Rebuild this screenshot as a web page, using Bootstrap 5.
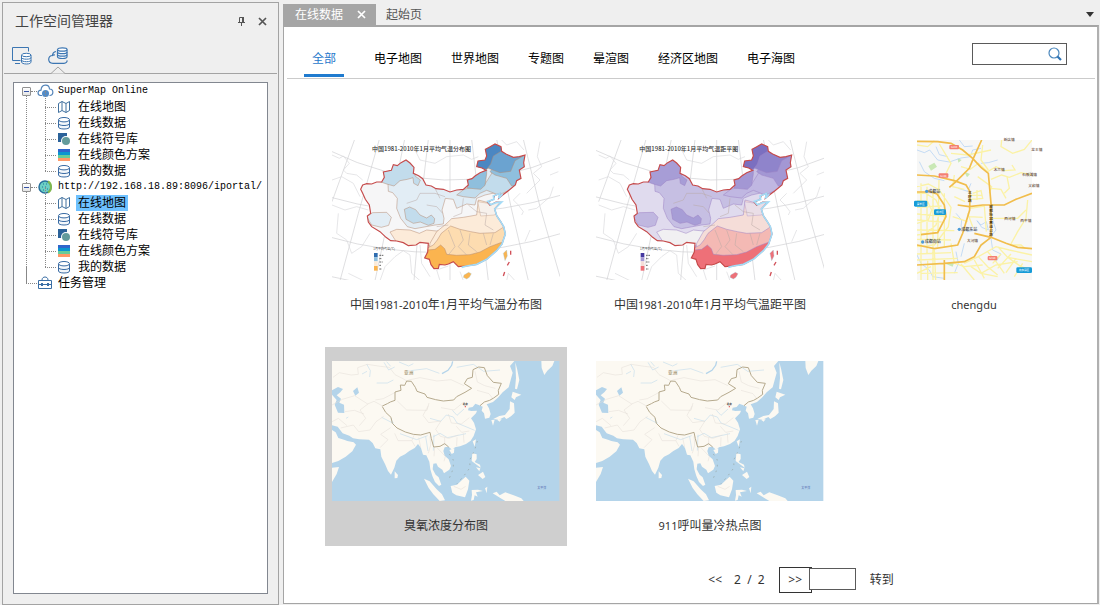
<!DOCTYPE html>
<html lang="zh-CN">
<head>
<meta charset="utf-8">
<meta name="viewport" content="width=device-width, initial-scale=1">
<title>在线数据</title>
<link href="https://cdn.jsdelivr.net/npm/bootstrap@5.3.0/dist/css/bootstrap.min.css" rel="stylesheet">
<style>
  body { font: 12px/16px "Noto Sans", "Noto Sans CJK SC", sans-serif; color: #333; background: #efefef; min-height: 100vh; padding: 2px 1px 0 2px; gap: 4px; }
  button, input { font: inherit; color: inherit; }
  .plain { border: 0; background: none; padding: 0; display: flex; align-items: center; }
  svg { display: block; }
  /* workspace panel */
  .workspace { width: 277px; border: 1px solid #a3a3a3; }
  .workspace-title { font-size: 14px; line-height: 20px; color: #444; height: 36px; padding: 0 11px 0 12px; }
  .modes { height: 35px; margin: 0 1px; padding-left: 8px; gap: 16px; border-bottom: 1px solid #a3a3a3; }
  .modes .plain { height: 34px; }
  .caret { position: absolute; left: 3px; bottom: -1px; }
  .tree-box { margin: 8px 10px 10px; background: #fff; border: 1px solid #828790; color: #000; overflow: hidden; }
  .tree, .tree ul { list-style: none; margin: 0; padding: 0; }
  .tree { padding-left: 8px; }
  .tree li { position: relative; white-space: nowrap; }
  .tree .node { height: 16px; }
  .tree .latin { font: 10px/16px "Liberation Mono", monospace; }
  .tree ul { padding-left: 23px; }
  .tree ul .node { padding-left: 12px; gap: 5px; }
  .tree ul .node > span { padding: 0 2px; }
  .tree .picked { background: #6ec1ff; }
  .tree li::before { content: ""; position: absolute; left: 4px; top: 8px; bottom: -8px; border-left: 1px dotted #888; }
  .tree > li:last-child::before { top: 0; bottom: auto; height: 8px; top: -8px; height: 17px; }
  .tree ul li::before { left: 0; top: -8px; bottom: 8px; }
  .dots { width: 6px; border-top: 1px dotted #888; }
  .dots-long { width: 11px; margin-left: 4px; }
  .tree ul li::after { content: ""; position: absolute; left: 0; top: 8px; width: 11px; border-top: 1px dotted #888; }
  .toggle { width: 9px; height: 9px; border: 1px solid #919191; border-radius: 1px; background: linear-gradient(#fff, #e4e4e4); padding: 0; position: relative; z-index: 1; }
  .toggle::before { content: ""; display: block; height: 1px; margin: 0 1px; background: #3552a5; }
  /* documents */
  .docs { padding-top: 2px; }
  .doc-tabs { height: 21px; padding-right: 5px; }
  .doc-tab { height: 21px; color: #555; }
  .doc-tab.current { background: #a5a5a5; color: #fff; padding: 0 10px 0 12px; gap: 14px; margin-right: 10px; }
  .page { border: 1px solid #a5a5a5; border-top-width: 2px; border-right: 2px solid #b0b0b0; background: #fff; margin-bottom: 1px; }
  .filters { margin: 0 2px 0 3px; padding: 16px 28px 0 17px; border-bottom: 1px solid #cbcbcb; height: 52px; }
  .filters nav { gap: 13px; }
  .filters nav a { color: #000; text-decoration: none; padding: 0 8px; line-height: 32px; height: 34px; }
  .filters nav a.on { color: #1f78cb; border-bottom: 4px solid #1f7bcf; border-bottom-width: 3px; margin-right: 9px; }
  .search { width: 95px; height: 22px; border: 1px solid #5a5a5a; background: #fff; }
  .search input { border: 0; outline: 0; min-width: 0; background: none; }
  .gallery { display: grid; grid-template-columns: repeat(auto-fill, 242px); gap: 22px; padding: 47px 0 21px 41px; }
  .tile { height: 199px; margin: 0; padding-top: 14px; }
  .tile figcaption { margin-top: 17px; text-align: center; }
  .tile small-n, .num { font-size: 11px; }
  .tile.selected { background: #cfcfcf; }
  .thumb { margin-left: 7px; width: 228px; height: 140px; }
  .thumb-square { margin: 0 auto; width: 115px; height: 140px; overflow: visible; }
  .pager { margin: 0 25% 10px auto; }
  .pager .go { border: 1px solid #333; height: 26px; width: 33px; background: #fff; padding: 0; margin-left: 14px; }
  .pager input { width: 47px; height: 22px; border: 1px solid #5a5a5a; border-radius: 0; margin: 0 14px 2px -3px; position: relative; padding: 0 4px; }
  /* climate map zones */
  .warm { --base:#e2edf5; --west:#f6f6f7; --nw:#c2dcec; --blob:#c2dcec; --spot:#e2edf5; --n1:#c2dcec; --n2:#8fbfdd; --n3:#6ba3d0; --n4:#4b87c2; --mid:#f4f4f6; --low:#fcebd9; --south:#fddcb0; --coast:#fbb44f; --tib:#fcebd9; --edge:#b58a72; --top:#2f6db0; }
  .anom { --base:#c6bfe3; --west:#e0dbee; --nw:#a79dd6; --blob:#a79dd6; --spot:#c0b7e0; --n1:#c0b7e2; --n2:#a397d4; --n3:#8f84cb; --n4:#7b6fc0; --mid:#e3dff0; --low:#f5ddd8; --south:#f4b9b4; --coast:#ee7078; --tib:#f1f0f2; --edge:#9c83c4; --top:#4438a0; }
  .map-text { font-family: "Noto Sans CJK SC", sans-serif; }
</style>
</head>
<body class="d-flex">

<svg width="0" height="0" class="position-absolute" aria-hidden="true">
  <defs>
    <symbol id="i-map" viewBox="0 0 14 14"><path d="M1.5 3.5 5 1.5v9L1.5 12.5zM5 1.5l4 2v9l-4-2M9 3.5l3.500-2v9l-3.500 2" fill="#fff" stroke="#41719f"/></symbol>
    <symbol id="i-db" viewBox="0 0 14 14"><path d="M1.500 4v7c0 1.200 2.300 2 5.500 2s5.500-.8 5.500-2V4" fill="#f3f7fb" stroke="#386aa3"/><ellipse cx="7" cy="3.700" rx="5.500" ry="2.200" fill="#fff" stroke="#386aa3"/><path d="M1.500 7.500c0 1.200 2.300 2 5.500 2s5.500-.8 5.500-2" fill="none" stroke="#386aa3"/></symbol>
    <symbol id="i-sym" viewBox="0 0 14 14"><path d="M1 1h9v9H1z" fill="#2b6299"/><circle cx="9" cy="9" r="5" fill="#fff"/><circle cx="9" cy="9" r="4" fill="#639b9b"/></symbol>
    <symbol id="i-color" viewBox="0 0 14 14"><path d="M1 1h12v3H1z" fill="#2f66cc"/><path d="M1 4h12v3H1z" fill="#0a96cf"/><path d="M1 7h12v3H1z" fill="#66cc99"/><path d="M1 10h12v3H1z" fill="#ff9966"/></symbol>

    <clipPath id="china"><use href="#china-line"/></clipPath>
    <path id="china-line" d="M128 165 140 161 155 162 170 156 185 156 193 142 190 126 214 121 220 104 232 107 243 98 258 90 270 99 282 112 280 130 296 137 308 146 318 165 334 168 348 176 370 178 390 186 410 180 430 178 445 165 442 150 456 146 465 138 480 128 498 121 486 114 470 110 474 93 495 90 500 78 496 58 509 51 525 42 543 50 545 64 558 72 580 82 598 80 615 75 611 98 613 110 598 120 603 145 590 152 586 165 565 182 548 195 536 205 540 190 524 196 520 208 503 217 510 226 528 216 542 217 524 237 530 257 542 275 551 290 556 312 546 342 530 362 500 388 470 403 440 408 415 410 400 395 385 402 375 405 358 403 355 415 342 416 333 404 328 388 314 384 323 366 325 340 300 337 288 345 265 347 250 338 230 333 212 332 198 322 180 305 155 290 145 276 142 258 152 250 148 225 136 208 128 190 122 178Z"/>
    <g id="climate">
      <g fill="none" stroke="#cfcfd2" stroke-width="2">
        <path d="M104 28 36 215M178 28 115 250 60 452M254 28 210 240 165 452M325 28 300 240 282 452M390 28V452M455 28 480 240 505 452M530 28 575 240 625 452M610 28 660 230 720 440M25 60Q370 230 725 80M25 200Q370 300 725 195M25 320Q370 420 725 310M25 438Q60 445 90 452"/>
        <path stroke="#dadadd" d="M36 75 58 85 70 78 88 100 70 120 80 130 110 135 128 150M36 150 65 140 100 160 120 200M36 225 75 240 110 230 145 240M55 250 50 310 80 330 95 370 125 350 150 310M85 430 130 452M180 452 195 410 225 380 250 362 270 375 275 430 300 452M300 345 305 400 330 440M285 60 300 90 345 100 380 80 430 75 455 88 475 80M545 30 560 45 590 35 612 60M600 190 580 210 595 225 610 245 605 255M625 240 650 235 690 200 700 170M690 135 715 125M660 35 652 80 665 110 640 130 660 150 620 190M360 452 350 420 385 408M430 452 420 425M560 452 565 430 585 452M615 335 630 300"/>
      </g>
      <g clip-path="url(#china)" stroke="var(--edge)" stroke-width="1.500" stroke-linejoin="round">
        <path fill="var(--base)" d="M100 30H640V430H100z"/>
        <path fill="var(--west)" d="M100 150 190 155 204 160 205 184 218 188 232 205 230 235 242 265 262 290 285 296 345 285 370 282 372 265 366 240 376 205 400 208 410 235 440 222 465 225 470 205 495 195 540 185 550 260 350 340 150 350 100 240Z"/>
        <path fill="var(--nw)" d="M180 155 185 100 258 80 290 110 285 138 301 150 294 167 281 160 279 143 262 148 240 152 222 168 200 162Z"/>
        <path fill="var(--spot)" d="M140 260 158 248 200 247 214 262 206 286 184 292 155 285Z"/>
        <path fill="var(--blob)" d="M253 238 269 231 287 239 300 255 320 264 334 255 344 266 342 280 325 286 301 276 280 280 258 268Z"/>
        <path fill="var(--n1)" d="M410 195 432 178 464 170 494 164 520 122 575 130 610 140 580 175 536 195 500 181 480 190 465 204 430 200Z"/>
        <path fill="var(--n2)" d="M442 174 445 145 500 112 500 132 495 166 482 178ZM510 125 530 100 620 60 616 165 575 168 560 145 525 135Z"/>
        <path fill="var(--n3)" d="M465 80 530 40 620 72 585 92 572 124 540 128 505 115 470 115Z"/>
        <path fill="var(--n4)" d="M466 115 474 82 495 80 490 40 546 40 543 64 520 78 512 102 500 118Z"/>
        <path fill="var(--tib)" d="M210 306 230 298 270 300 298 310 320 300 350 303 372 300 392 288 360 345 280 350 230 337Z"/>
        <path fill="var(--low)" d="M330 340 350 305 378 282 395 266 430 262 470 255 475 210 505 218 560 210V330L440 380 325 375Z"/>
        <path fill="var(--mid)" d="M473 215 505 220 560 208 524 255 482 258Z" opacity=".65"/>
        <path fill="var(--south)" d="M320 355 340 345 352 330 364 310 392 288 420 298 452 305 480 310 525 308 560 285V420H315Z"/>
        <path fill="var(--coast)" d="M310 390 322 360 345 358 362 345 374 356 380 373 410 376 450 374 480 366 510 350 550 335 540 375 470 415 330 420Z"/>
      </g>
      <path fill="none" stroke="#b9a9a5" stroke-width="1.500" d="M260 220 290 210 300 190 345 190 375 200M320 225 350 230 368 250M345 175 360 205M430 205 425 250 400 260M445 225 470 245 500 250M350 290 385 285M385 300 405 350 385 375M420 300 430 330 415 350 440 375M450 310 445 345 470 365M490 310 500 345M520 310 510 345M500 250 495 285 520 300"/>
      <use href="#china-line" fill="none" stroke="#c64b4b" stroke-width="3.500"/>
      <path fill="none" stroke="#a3dcf7" stroke-width="5" d="M548 192 536 205 540 190 520 198 522 208 503 214 512 224 528 218 545 216 524 237 530 257 542 275 551 290 556 312 546 342 530 362 500 388 470 403 440 408 425 412"/>
      <path fill="var(--coast)" stroke="#9cc7de" d="M432 435 446 427 454 431 448 442 440 447 430 442ZM550 370 560 360 562 378 555 392Z"/>
      <path stroke="#d15159" stroke-width="4" d="M572 362V374M568 396 562 406M554 426 550 438"/>
      <path fill="var(--top)" d="M162 369h11v13h-11z"/><path fill="var(--n2)" d="M162 382h11v12h-11z"/><path fill="var(--low)" d="M162 394h11v14h-11z"/><path fill="var(--coast)" d="M162 408h11v14h-11z"/>
      <path stroke="#666" stroke-width="3" stroke-dasharray="5 2" d="M178 376h12M178 386h8M178 396h10M178 406h6M178 417h8"/>
      <text class="map-text" x="160" y="361" font-size="9" fill="#444">1月平均气温(℃)</text>
    </g>

    <g id="asia">
      <path fill="#b4d4ea" d="M36 63h682v420H36z"/>
      <g fill="#fcf9f2">
        <path d="M36 63H583L570 78 578 98 572 120 566 142 548 157 535 172 519 186 500 193 507 205 512 222 508 233 495 236 492 220 485 212 488 200 478 196 466 191 458 201 446 203 444 211 454 213 471 212 468 220 453 235 462 248 468 268 461 288 452 302 438 312 420 319 405 322 396 329 386 320 374 322 370 333 374 347 386 358 393 378 388 389 372 400 367 389 354 380 349 370 340 371 338 388 347 404 356 412 364 434 357 438 345 426 337 408 331 388 328 365 319 346 309 344 303 324 294 312 284 324 268 333 255 343 240 350 229 362 223 383 213 404 204 393 195 372 184 350 181 328 166 325 158 309 147 299 118 298 99 295 88 287 68 280 53 260 36 256Z"/>
        <path d="M36 270 47 277 55 294 72 299 82 303 101 307 108 314 97 334 77 350 55 363 36 369ZM36 383 57 381 50 402 36 426ZM224 394 234 405 232 414 224 415ZM388 330 403 325 402 338 395 342ZM458 304 468 298 464 320ZM586 67 592 90 598 120 591 148 585 146 588 114ZM664 63H703L697 78 682 92 673 105 665 84ZM578 155 604 164 588 172 584 180 574 172ZM570 184 582 190 584 218 573 229 559 237 553 231 536 239 520 237 538 228 555 225 569 207ZM514 240 524 239 519 257ZM532 240 545 237 539 245ZM457 340 470 343 470 357 464 366 480 374 482 383 467 372 455 363ZM468 382 481 385 478 394ZM474 405 489 395 496 411 488 417ZM312 416 329 424 350 448 366 463 375 481 359 483 340 463 326 444ZM392 438 411 434 425 421 437 410 448 422 444 448 435 472 409 466 397 458ZM455 450 474 449 489 453 468 457 473 470 464 466 461 480 453 482 456 465ZM518 460 530 455 539 466 556 457 581 466 604 475 611 483 556 483 541 474ZM495 445 502 440 500 460Z"/>
      </g>
      <path fill="#b4d4ea" d="M36 151 54 141 69 147 61 157 50 166 63 176 58 188 72 194 73 219 54 218 44 194 50 180 36 164ZM99 153 112 142 117 158 106 167Z"/>
      <g fill="none" stroke="#b4d4ea">
        <path stroke-width="4" d="M366 101 384 91 395 76 398 64"/>
        <path stroke-width="1.500" d="M140 72 151 92 149 111M192 67 206 90 224 81M237 66 266 78 280 71M170 129 202 129 220 120M272 92 320 86 358 100M410 82 460 73 491 94 540 90M185 232 220 250 212 235M240 281 290 299 323 287M330 235 362 244 379 225 400 231 411 249 464 271M340 290 360 280 382 293 438 281M432 207 411 226 397 211M317 290 324 333M342 284 340 332M200 65 212 79M126 102 141 94M85 231 78 235"/>
      </g>
      <g fill="none" stroke="#e3dcd6" stroke-width="1.500">
        <path d="M39 112 58 98 94 105 115 103 113 83 142 73 181 79 208 82 225 104 249 116 265 126M36 195 67 178 104 167 143 192 162 184 188 198M62 264 100 255 116 275 150 270 168 245 191 229M145 191 120 210 137 235 118 257M36 245 55 235 81 257M75 215 103 211 132 222M265 120 300 113 351 123 393 119 432 137M166 180 190 176 226 157M180 323 204 299 182 283 212 263M224 280 234 302 276 302 282 286M276 303 285 319M296 293 302 322M330 289 332 315 325 340M344 320 342 349M351 323 376 349 372 364M232 183 260 210 321 211 327 189M325 197 309 226 326 248 363 243 347 268 361 289 387 295 415 285M363 203 402 210 429 188M385 222 394 249 424 252 448 233M409 259 425 277 448 273M374 293 374 316M411 292 410 319M430 280 432 308M465 94 472 126 494 137 526 145M471 151 507 161 519 177M401 439 423 448 437 439"/>
      </g>
      <path fill="none" stroke="#b6aa8e" stroke-width="3" stroke-linejoin="round" d="M187 198 202 191 211 186 225 181 225 156 243 151 241 135 254 136 260 123 274 124 286 142 291 154 315 162 321 172 347 179 370 183 401 180 410 170 435 157 455 145 433 131 442 116 457 112 459 89 476 81 493 83 502 107 520 127 544 130 535 151 536 163 521 174 509 181 493 186 480 197M187 200 197 217 213 232 217 250 231 264 256 276 280 283 302 285 330 277 334 296 341 321 360 319 374 311 386 321"/>
      <path fill="none" stroke="#95a4a2" stroke-width="2" stroke-dasharray="5 13" d="M472 303 464 330 449 360 450 383 432 407 411 431M388 342 400 360 400 385 388 415"/>
      <circle cx="436" cy="200" r="2" fill="#e34848"/>
      <g class="map-text"><text x="252" y="102" font-size="14" fill="#8a7a55">亚洲</text><text x="428" y="194" font-size="8" font-weight="700" fill="#222">北京</text><text x="652" y="446" font-size="9" fill="#5269b0">太平洋</text></g>
    </g>
  </defs>
</svg>

<aside class="workspace d-flex flex-column flex-shrink-0">
  <header class="workspace-title d-flex align-items-center">
    <span class="me-auto">工作空间管理器</span>
    <button class="plain me-2" type="button" aria-label="固定"><svg width="9" height="9" viewBox="0 0 9 9"><path d="M2.500 5V.5h4V5" fill="none" stroke="#555"/><path d="M5 0h2v5H5zM1 5h7v1H1zM4 6h1v3H4z" fill="#555"/></svg></button>
    <button class="plain ms-1" type="button" aria-label="关闭"><svg width="9" height="9" viewBox="0 0 9 9"><path d="M1 1 8 8M8 1 1 8" stroke="#555" stroke-width="1.700"/></svg></button>
  </header>
  <div class="modes d-flex">
    <button class="plain" type="button" aria-label="本地"><svg width="20" height="18" viewBox="0 0 20 18" fill="none" stroke="#3c76b2"><path d="M8.500 13.500H.5V.5h16v4M3 16.500h5"/><path d="M9.500 8v7c0 1 2 2 5 2s4.500-1 4.500-2V8" fill="#fff"/><ellipse cx="14.300" cy="8" rx="4.700" ry="1.700" fill="#fff"/><path d="M9.500 10.500c0 1 2 1.700 5 1.700s4.500-.7 4.500-1.700M9.500 13c0 1 2 1.700 5 1.700s4.500-.7 4.500-1.700"/></svg></button>
    <button class="plain position-relative" type="button" aria-label="在线"><svg width="20" height="18" viewBox="0 0 20 18" fill="none" stroke="#3c76b2" stroke-width="1.200"><path d="M8 4.500C5.500 5 4.500 6.500 4.500 8.500 2 8.500.7 10.300.7 12.300.7 14.700 2.500 16.300 5 16.300h11c2 0 3.300-1.300 3-3"/><path d="M9.500 2.500v7.300c0 1 2 1.700 5 1.700s4.500-.7 4.500-1.700V2.500" fill="#fff"/><ellipse cx="14.300" cy="2.500" rx="4.700" ry="1.700" fill="#fff"/><path d="M9.500 5c0 1 2 1.700 5 1.700S19 6 19 5M9.500 7.500c0 1 2 1.700 5 1.700s4.500-.7 4.500-1.700M7 8c-1.500-.3-2.500 0-3 1"/></svg>
      <svg class="caret" width="14" height="8" viewBox="0 0 14 8"><path d="M0 7.500 7 1l7 6.500" fill="#efefef" stroke="#a3a3a3"/></svg></button>
  </div>
  <div class="tree-box flex-grow-1">
    <ul class="tree">
      <li>
        <div class="node d-flex align-items-center"><button class="toggle" type="button" aria-label="折叠"></button><i class="dots"></i><svg class="me-1" width="17" height="14" viewBox="0 0 17 14"><path d="M5 11.500H3.500C0 11 .3 6.500 4 6.200 4.500-.3 12-.3 12.500 5c4.500.2 4.500 6.300 0 6.500" fill="none" stroke="#5283b8" stroke-width="1.200"/><circle cx="8.500" cy="9.500" r="3.500" fill="#528bc7"/></svg><span class="latin">SuperMap Online</span></div>
        <ul>
          <li><div class="node d-flex align-items-center"><svg width="14" height="14"><use href="#i-map"/></svg><span>在线地图</span></div></li>
          <li><div class="node d-flex align-items-center"><svg width="14" height="14"><use href="#i-db"/></svg><span>在线数据</span></div></li>
          <li><div class="node d-flex align-items-center"><svg width="14" height="14"><use href="#i-sym"/></svg><span>在线符号库</span></div></li>
          <li><div class="node d-flex align-items-center"><svg width="14" height="14"><use href="#i-color"/></svg><span>在线颜色方案</span></div></li>
          <li><div class="node d-flex align-items-center"><svg width="14" height="14"><use href="#i-db"/></svg><span>我的数据</span></div></li>
        </ul>
      </li>
      <li>
        <div class="node d-flex align-items-center"><button class="toggle" type="button" aria-label="折叠"></button><i class="dots"></i><svg class="me-1" width="17" height="14" viewBox="0 0 17 14"><circle cx="8" cy="7" r="6" fill="#6ccfc4" stroke="#28709c" stroke-width="1.500"/><path d="M11 1.500c4 2 4 9 0 11" fill="none" stroke="#7fb84e" stroke-width="2"/><path d="M6 4h1m2 0h1M5 7h1m2 0h1m1 2h1M6 10h1" stroke="#18769f"/></svg><span class="latin">http://192.168.18.89:8096/iportal/</span></div>
        <ul>
          <li><div class="node d-flex align-items-center"><svg width="14" height="14"><use href="#i-map"/></svg><span class="picked">在线地图</span></div></li>
          <li><div class="node d-flex align-items-center"><svg width="14" height="14"><use href="#i-db"/></svg><span>在线数据</span></div></li>
          <li><div class="node d-flex align-items-center"><svg width="14" height="14"><use href="#i-sym"/></svg><span>在线符号库</span></div></li>
          <li><div class="node d-flex align-items-center"><svg width="14" height="14"><use href="#i-color"/></svg><span>在线颜色方案</span></div></li>
          <li><div class="node d-flex align-items-center"><svg width="14" height="14"><use href="#i-db"/></svg><span>我的数据</span></div></li>
        </ul>
      </li>
      <li><div class="node d-flex align-items-center"><i class="dots dots-long"></i><svg class="me-1" width="17" height="14" viewBox="0 0 17 14"><path d="M1.500 4.500h13v8h-13zM5 4c0-4 6-4 6 0M1.500 8.500h13" fill="none" stroke="#3a6ea5"/><path d="M4 7h2v3H4zM10 7h2v3h-2z" fill="#3a6ea5"/></svg><span>任务管理</span></div></li>
    </ul>
  </div>
</aside>

<main class="docs d-flex flex-column flex-grow-1">
  <div class="doc-tabs d-flex align-items-center">
    <div class="doc-tab current d-flex align-items-center"><span>在线数据</span><button class="plain" type="button" aria-label="关闭"><svg width="9" height="9" viewBox="0 0 9 9"><path d="M1 1 8 8M8 1 1 8" stroke="#fff" stroke-width="1.700"/></svg></button></div>
    <button class="plain doc-tab" type="button">起始页</button>
    <button class="plain ms-auto" type="button" aria-label="文档列表"><svg width="8" height="5" viewBox="0 0 8 5"><path d="M0 0h8L4 5z" fill="#333"/></svg></button>
  </div>
  <section class="page d-flex flex-column flex-grow-1">
    <div class="filters d-flex align-items-start justify-content-between">
      <nav class="d-flex">
        <a class="on" href="#">全部</a><a href="#">电子地图</a><a href="#">世界地图</a><a href="#">专题图</a><a href="#">晕渲图</a><a href="#">经济区地图</a><a href="#">电子海图</a>
      </nav>
      <form class="search d-flex align-items-center">
        <input class="flex-grow-1" type="text" aria-label="搜索">
        <button class="plain me-1 pe-none" type="button" aria-label="搜索"><svg width="14" height="14" viewBox="0 0 14 14"><circle cx="6" cy="6" r="5" fill="none" stroke="#4d88bd" stroke-width="1.200"/><path d="M9.500 9.500 13 13" stroke="#2f74b5" stroke-width="2.200"/></svg></button>
      </form>
    </div>

    <div class="gallery">
      <figure class="tile">
        <svg class="thumb warm" viewBox="36 30 684 420"><use href="#climate"/><text class="map-text" x="156" y="62" font-size="18" font-weight="500" fill="#333">中国1981-2010年1月平均气温分布图</text></svg>
        <figcaption>中国<span class="num">1981-2010</span>年<span class="num">1</span>月平均气温分布图</figcaption>
      </figure>
      <figure class="tile">
        <svg class="thumb anom" viewBox="33 30 684 420"><use href="#climate" x="5"/><text class="map-text" x="163" y="62" font-size="18" font-weight="500" fill="#333">中国1981-2010年1月平均气温距平图</text></svg>
        <figcaption>中国<span class="num">1981-2010</span>年<span class="num">1</span>月平均气温距平图</figcaption>
      </figure>
      <figure class="tile">
        <svg class="thumb-square" viewBox="48 30 345 420">
          <clipPath id="city"><path d="M48 30h345v420H48z"/></clipPath>
          <g clip-path="url(#city)" fill="none">
            <path fill="#f7f7f6" d="M48 30h345v420H48z"/>
            <path fill="#c9e8b5" d="M82 108 100 98 108 110 90 122ZM190 125 207 132 198 142ZM170 85 182 90 172 98ZM135 402 160 396 155 410Z"/>
            <g stroke="#aacdf3" stroke-width="2"><path d="M48 60 70 68 86 60 110 90 145 96 180 84 208 80 215 60 240 55M240 100 262 98 290 90M105 50 115 74 140 80M175 30 190 50 215 48M55 95 70 125 100 145 130 152M172 175 200 184 210 160M165 250 182 270 180 290 200 305 225 300M228 272 240 285 256 275 262 300 242 292ZM275 270 285 300 262 328 240 348M48 375 60 400 85 420 95 440 130 445M165 365 172 400 160 430M190 340 180 380M270 325 275 360 300 372 285 395"/></g>
            <g stroke="#fbf2a6" stroke-width="4">
              <path d="M48 170 82 162 115 180 150 232 142 290 100 345 48 350M48 190 75 190 105 210 118 240 105 285 75 310 48 315M48 212 80 215 92 240 82 270 48 280M48 232 122 228M48 252 130 258M48 270 122 276M60 160V450M78 170V370M96 180V450M114 150 110 350M130 190V350M48 300 160 302M48 328 150 330M48 372 150 368M48 390 170 385M60 430 170 428M100 360 104 450M80 390V450M155 260 200 275M48 430 90 410M150 340 160 400 190 410 245 405"/>
              <path d="M180 110 208 118 232 100 260 125 285 110 310 122 342 120 333 105M302 30 300 50 335 70 370 58 393 30M270 148 302 135 325 142 360 128 393 135M230 140 272 170 265 190M270 175 300 178 315 205M318 140 325 175 310 190M215 190 240 182 245 205 210 208M210 196H245M228 180V210M270 265H350L375 240M380 210 375 265 350 305 328 345M332 345 360 345 372 355M48 45 80 50 100 32M115 42 150 100 135 130M150 70 200 75 270 60M245 45 240 90 262 120M160 135 155 170 190 178M160 200 192 215M208 235 250 228 256 305M200 250 215 290M205 260 245 262"/>
              <path d="M190 400 232 380 285 350 325 360 393 375M210 410 240 430 290 440M232 380 260 410 290 435M260 365 285 395 310 430M290 350 320 382 360 410 393 420M220 390 250 445M275 400 300 372M290 415 330 372M315 428 345 385M340 440 365 400M240 430 285 405 350 395M320 382 393 395M180 402 220 450"/>
            </g>
            <g stroke="#f1bd4b" stroke-width="5"><path d="M48 34 110 35 150 40 185 60 215 85 240 112 262 130 270 220 270 320M242 30 217 85 205 115 165 155 145 172M48 135 100 138 160 152 195 165 207 185 206 240 185 310 170 345 100 356 48 345M170 225 205 230 245 225 310 225 345 208 393 190M80 182 108 192 130 225 135 260 110 308 60 314M220 310 270 322 315 340 350 352 393 356M48 405 130 400 190 395 220 380 240 345 270 322M130 390V450M48 186H80"/></g>
          </g>
          <g fill="#f47f72"><rect x="145" y="45" width="29" height="13" rx="3"/><rect x="113" y="130" width="29" height="13" rx="3"/><rect x="260" y="378" width="29" height="13" rx="3"/></g>
          <g fill="#169bd7"><rect x="39" y="212" width="40" height="18" rx="4"/><rect x="99" y="238" width="36" height="17" rx="4"/><rect x="346" y="412" width="47" height="17" rx="4"/></g>
          <g fill="#4b9bd8"><circle cx="77" cy="184" r="5"/><circle cx="175" cy="298" r="5"/><circle cx="65" cy="336" r="5"/></g>
          <g class="map-text" font-size="11" fill="#654b3c" font-weight="500">
            <text x="308" y="34">新店镇</text><text x="391" y="62">龙王镇</text><text x="278" y="122">木兰镇</text><text x="364" y="138">石板滩镇</text><text x="382" y="172">义和镇</text><text x="310" y="269">西河镇</text><text x="358" y="277">西平镇</text><text x="198" y="335">大河镇</text>
          </g>
          <g class="map-text" font-size="12" fill="#39414a" font-weight="500"><text x="82" y="188">成都站</text><text x="181" y="303">成都东站</text><text x="71" y="340">成都南站</text></g>
          <g class="map-text" font-size="8" fill="#fff"><text x="47" y="224">青羊区</text><text x="105" y="250">成华区</text><text x="353" y="424">龙泉驿区</text><text x="150" y="55">G108</text><text x="118" y="140">G108</text><text x="265" y="388">G318</text></g>
          <g class="map-text" font-size="11" fill="#523d16" font-weight="700"><text x="201" y="193">三<tspan x="201" dy="12">环</tspan><tspan x="201" dy="12">路</tspan></text><text x="265" y="234">成<tspan x="265" dy="12">都</tspan><tspan x="265" dy="12">绕</tspan><tspan x="265" dy="12">城</tspan><tspan x="265" dy="12">高</tspan><tspan x="265" dy="12">速</tspan><tspan x="265" dy="12">公</tspan><tspan x="265" dy="12">路</tspan></text></g>
        </svg>
        <figcaption class="num">chengdu</figcaption>
      </figure>
      <figure class="tile selected">
        <svg class="thumb" viewBox="36 63 684 420"><use href="#asia"/></svg>
        <figcaption>臭氧浓度分布图</figcaption>
      </figure>
      <figure class="tile">
        <svg class="thumb" viewBox="36 63 684 420"><use href="#asia"/></svg>
        <figcaption><span class="num">911</span>呼叫量冷热点图</figcaption>
      </figure>
    </div>

    <div class="pager d-flex align-items-center">
      <button class="plain me-2 pe-1" type="button">&lt;&lt;</button>
      <span>2 &nbsp;/ &nbsp;2</span>
      <button class="go" type="button">&gt;&gt;</button>
      <input type="text" aria-label="页码">
      <button class="plain" type="button">转到</button>
    </div>
  </section>
</main>
<script src="https://cdn.jsdelivr.net/npm/bootstrap@5.3.0/dist/js/bootstrap.bundle.min.js"></script>
</body>
</html>
